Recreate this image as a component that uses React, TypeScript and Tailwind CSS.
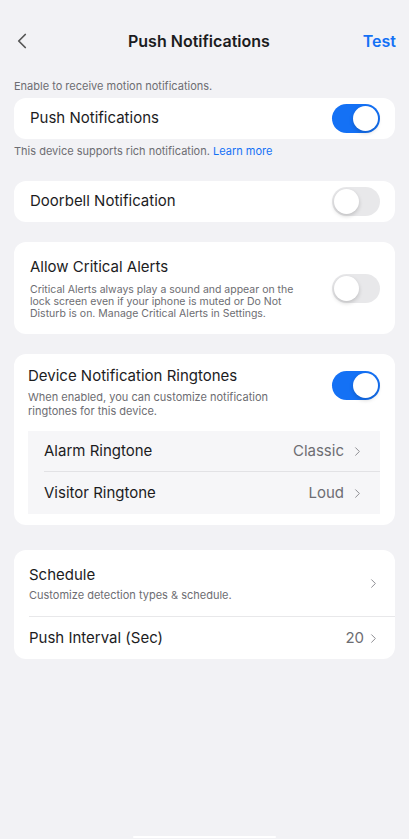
import React, { useState } from 'react';
import { ChevronLeft, ChevronRight } from 'lucide-react';

const Toggle: React.FC<{ on: boolean; onChange: () => void }> = ({ on, onChange }) => (
    <button
        onClick={onChange}
        className={`relative w-[48px] h-[29px] rounded-full shrink-0 transition-colors ${on ? 'bg-[#1471f5]' : 'bg-[#e8e8ea]'}`}
    >
        <span
            className={`absolute top-[2px] w-[25px] h-[25px] rounded-full bg-white shadow-[0_2px_4px_rgba(0,0,0,0.18)] transition-all ${on ? 'left-[21px]' : 'left-[2px]'}`}
        />
    </button>
);

const Caption: React.FC<{ children: React.ReactNode; className?: string }> = ({ children, className = '' }) => (
    <p className={`text-[11px] leading-[14px] text-[#6d6d72] ${className}`}>{children}</p>
);

export default function App() {
    const [push, setPush] = useState(true);
    const [doorbell, setDoorbell] = useState(false);
    const [critical, setCritical] = useState(false);
    const [ringtones, setRingtones] = useState(true);

    return (
        <div className="min-h-[839px] bg-[#f2f2f5] font-['Inter',sans-serif] text-[#1c1c1e] px-[14px] pt-[19px]">
            {/* header */}
            <div className="h-[44px] flex items-center justify-between">
                <ChevronLeft size={26} strokeWidth={1.6} className="text-[#555] -ml-[5px]" />
                <h1 className="text-[16px] font-semibold">Push Notifications</h1>
                <button className="text-[16px] font-semibold text-[#1471f5] -mr-[1px]">Test</button>
            </div>

            <Caption className="mt-[16px]">Enable to receive motion notifications.</Caption>
            <div className="mt-[5px] bg-white rounded-[12px] h-[41px] pl-[16px] pr-[15px] flex items-center justify-between">
                <span className="text-[15px]">Push Notifications</span>
                <Toggle on={push} onChange={() => setPush(!push)} />
            </div>
            <Caption className="mt-[5px]">
                This device supports rich notification. <span className="text-[#1471f5]">Learn more</span>
            </Caption>

            <div className="mt-[23px] bg-white rounded-[12px] h-[41px] pl-[16px] pr-[15px] flex items-center justify-between">
                <span className="text-[15px]">Doorbell Notification</span>
                <Toggle on={doorbell} onChange={() => setDoorbell(!doorbell)} />
            </div>

            <div className="mt-[20px] bg-white rounded-[12px] pl-[16px] pr-[15px] pt-[15px] pb-[14px] flex items-center justify-between gap-4">
                <div className="w-[270px]">
                    <div className="text-[15px] leading-[20px]">Allow Critical Alerts</div>
                    <p className="mt-[7px] text-[10.5px] leading-[12px] text-[#6d6d72]">
                        Critical Alerts always play a sound and appear on the lock screen even if your iphone is muted or Do Not Disturb is on. Manage Critical Alerts in Settings.
                    </p>
                </div>
                <Toggle on={critical} onChange={() => setCritical(!critical)} />
            </div>

            <div className="mt-[20px] bg-white rounded-[12px] pl-[14px] pr-[15px] pt-[12px] pb-[11px]">
                <div className="flex justify-between items-start">
                    <div className="w-[270px]">
                        <div className="text-[15px] leading-[20px]">Device Notification Ringtones</div>
                        <p className="mt-[4px] text-[11px] leading-[14px] text-[#6d6d72]">
                            When enabled, you can customize notification ringtones for this device.
                        </p>
                    </div>
                    <div className="pt-[5px]">
                        <Toggle on={ringtones} onChange={() => setRingtones(!ringtones)} />
                    </div>
                </div>
                <div className="mt-[13px] bg-[#f6f6f8] pl-[16px]">
                    {[
                        { label: 'Alarm Ringtone', value: 'Classic' },
                        { label: 'Visitor Ringtone', value: 'Loud' },
                    ].map((row, i) => (
                        <div
                            key={row.label}
                            className={`flex items-center justify-between pr-[15px] ${i === 0 ? 'h-[41px] border-b border-[#e2e2e5]' : 'h-[42px]'}`}
                        >
                            <span className="text-[15px]">{row.label}</span>
                            <span className="flex items-center gap-[6px] text-[15px] text-[#6d6d72]">
                                {row.value}
                                <ChevronRight size={15} strokeWidth={1.6} className="text-[#8e8e93]" />
                            </span>
                        </div>
                    ))}
                </div>
            </div>

            <div className="mt-[25px] bg-white rounded-[12px] pl-[15px]">
                <div className="h-[67px] flex items-center justify-between pr-[14px] border-b border-[#e8e8ea]">
                    <div>
                        <div className="text-[15px] leading-[20px]">Schedule</div>
                        <Caption className="mt-[3px] text-[10.5px]">Customize detection types &amp; schedule.</Caption>
                    </div>
                    <ChevronRight size={15} strokeWidth={1.6} className="text-[#8e8e93]" />
                </div>
                <div className="h-[42px] flex items-center justify-between pr-[14px]">
                    <span className="text-[15px]">Push Interval (Sec)</span>
                    <span className="flex items-center gap-[2px] text-[15px] text-[#6d6d72]">
                        20
                        <ChevronRight size={15} strokeWidth={1.6} className="text-[#8e8e93]" />
                    </span>
                </div>
            </div>

            <div className="mt-[177px] mx-auto w-[143px] h-[2px] rounded-full bg-white" />
        </div>
    );
}
